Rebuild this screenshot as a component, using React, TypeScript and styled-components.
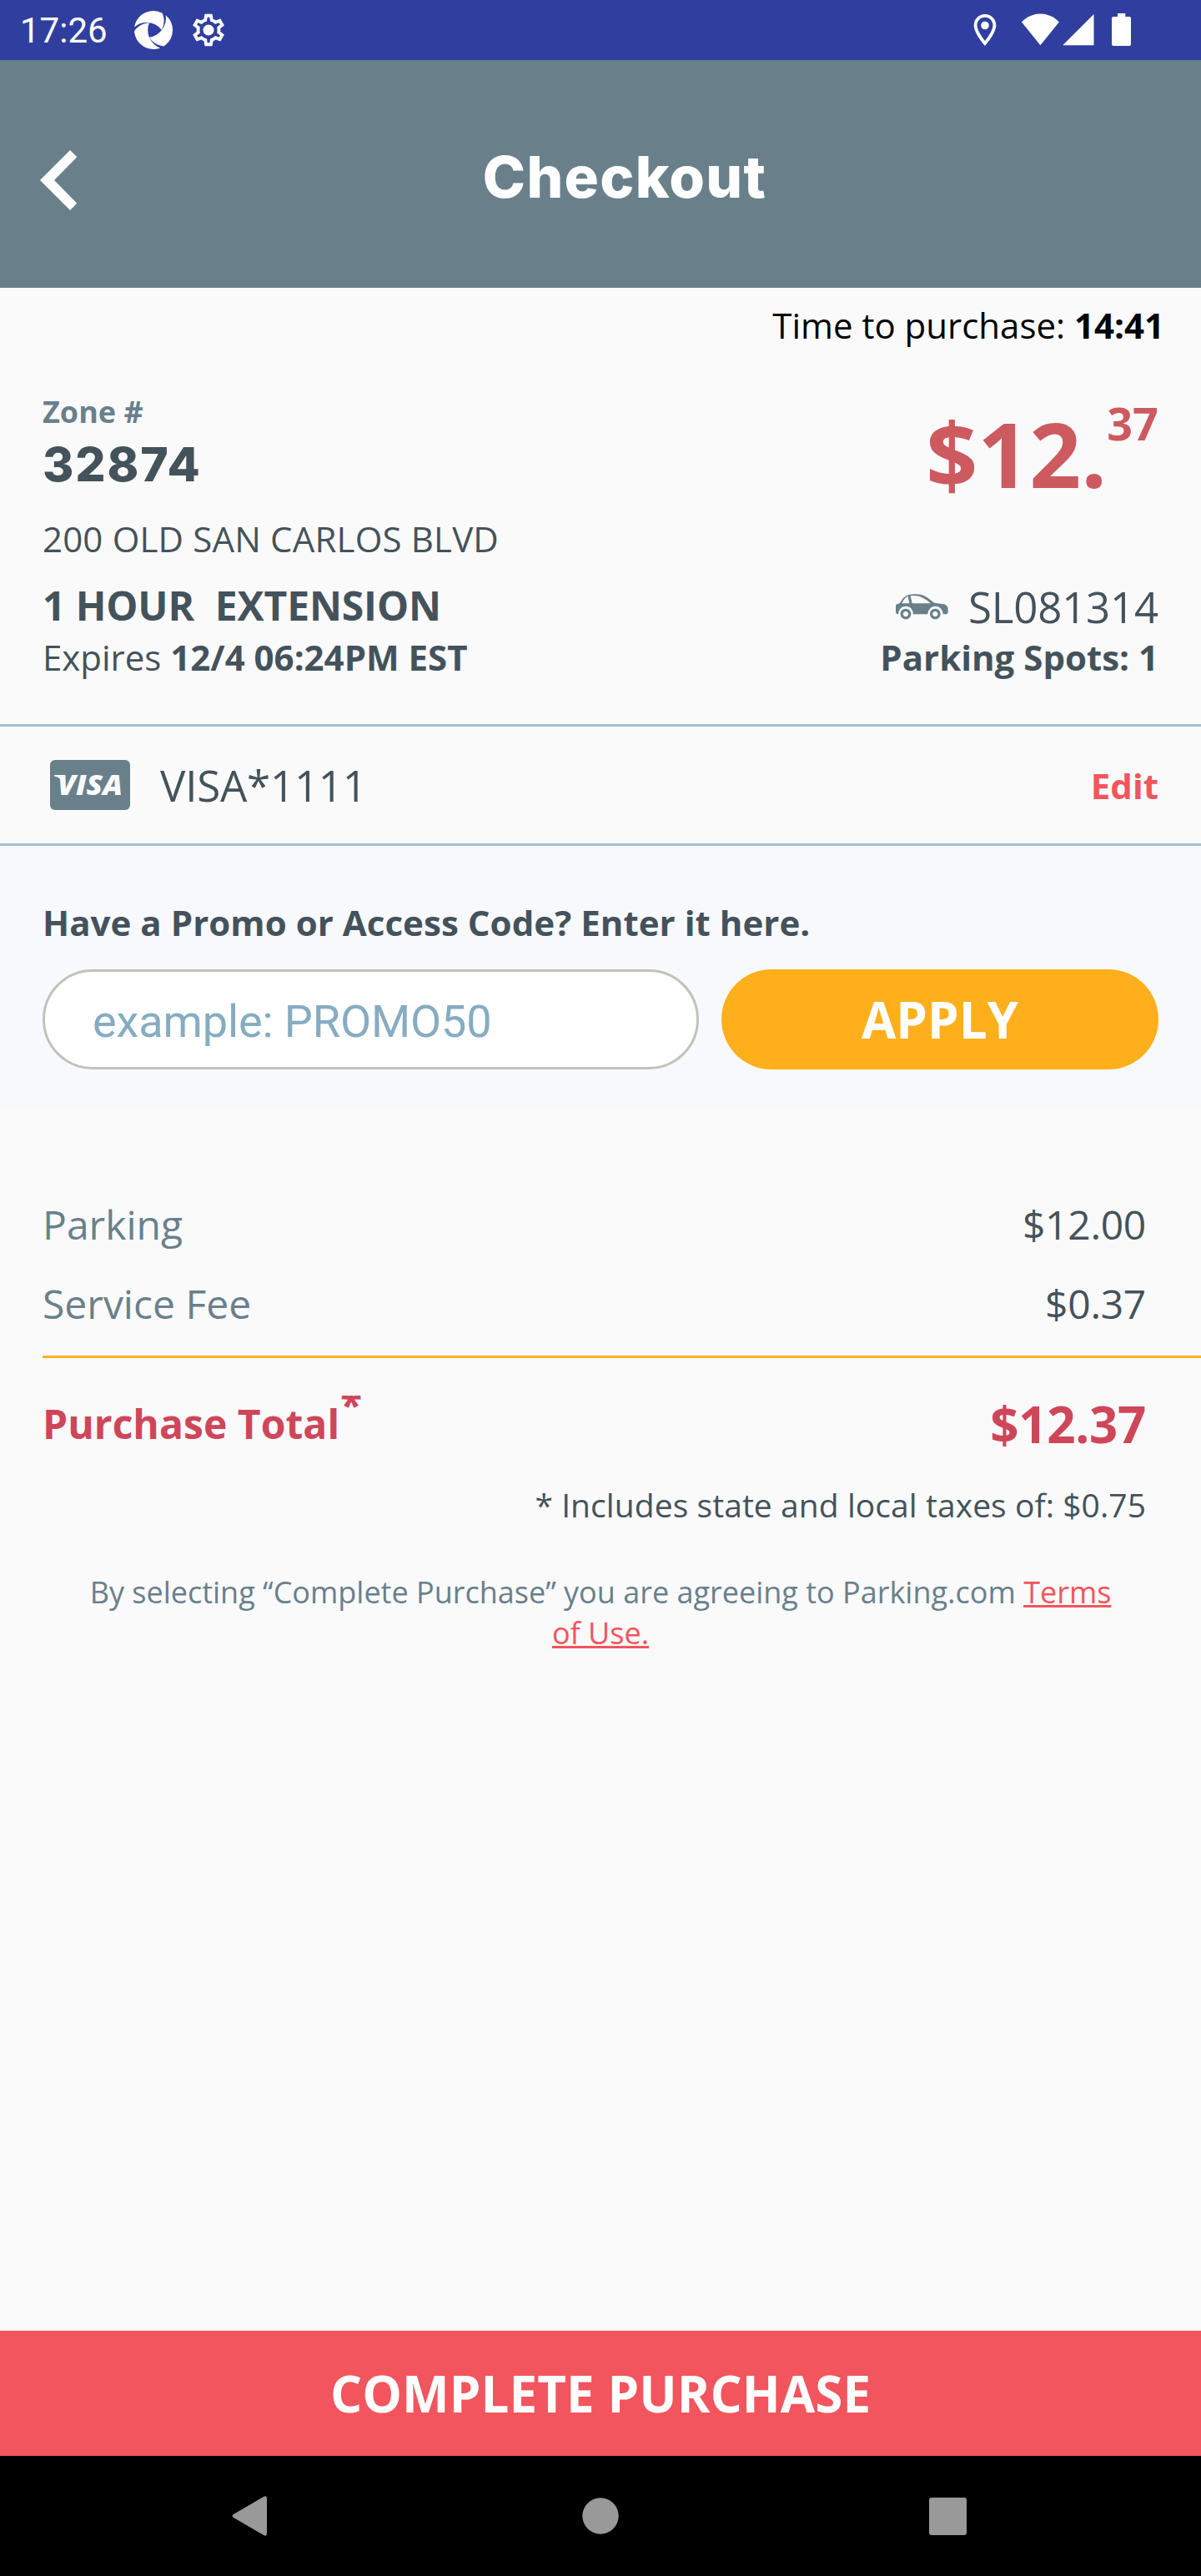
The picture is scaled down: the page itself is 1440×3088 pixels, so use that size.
import React from "react";
import styled, { createGlobalStyle } from "styled-components";
import { SiAppium } from "react-icons/si";

const slate = "#69808b";
const ink = "#44525b";
const coral = "#f2555d";
const crimson = "#cf4659";
const amber = "#ffaf1c";
const sky = "#9dc2d3";

const GlobalStyle = createGlobalStyle`
  * { box-sizing: border-box; }
  body { margin: 0; background: #fafafa; font-family: "Open Sans", "Noto Sans", sans-serif; }
`;

const Screen = styled.div`
  display: flex;
  flex-direction: column;
  width: 1440px;
  height: 3088px;
  background: #fafafa;
  color: ${ink};
  overflow: hidden;
`;

const StatusBar = styled.div`
  display: flex;
  align-items: center;
  justify-content: space-between;
  height: 72px;
  flex: none;
  padding: 0 83px 0 24px;
  background: #303f9f;
  color: #fff;
`;

const StatusGroup = styled.div`
  display: flex;
  align-items: center;
  gap: 20px;
`;

const Clock = styled.span`
  width: 117px;
  padding-top: 2px;
  font: 400 42px/72px Roboto, sans-serif;
`;

const Header = styled.header`
  display: grid;
  grid-template-columns: 140px 1fr 140px;
  align-items: center;
  height: 273px;
  flex: none;
  background: ${slate};
`;

const BackButton = styled.button`
  display: flex;
  padding: 14px 0 0 48px;
  border: 0;
  background: none;
`;

const Title = styled.h1`
  margin: 0;
  padding: 6px 0 0 58px;
  text-align: center;
  color: #fff;
  font: 800 69px/80px Inter, sans-serif;
  letter-spacing: 1.3px;
`;

const TimeRow = styled.div`
  height: 88px;
  padding: 1px 44px 0 0;
  text-align: right;
  color: #000;
  font-size: 42px;
  line-height: 88px;
`;

const Summary = styled.section`
  display: flex;
  justify-content: space-between;
  height: 435px;
  padding: 37px 51px 0;
`;

const Column = styled.div<{ $end?: boolean }>`
  display: flex;
  flex-direction: column;
  align-items: ${(p) => (p.$end ? "flex-end" : "flex-start")};
`;

const ZoneLabel = styled.div`
  color: ${slate};
  font-size: 36px;
  font-weight: 700;
  line-height: 48px;
`;

const ZoneNumber = styled.div`
  margin-top: 9px;
  font: 800 57px/60px Inter, sans-serif;
  letter-spacing: 1.9px;
`;

const Address = styled.div`
  margin-top: 31px;
  font-size: 42px;
  line-height: 56px;
  letter-spacing: 0.17px;
`;

const Duration = styled.div`
  margin-top: 20px;
  font-size: 48px;
  font-weight: 700;
  line-height: 64px;
  letter-spacing: -0.12px;
  white-space: pre;
`;

const Detail = styled.div<{ $bold?: boolean }>`
  margin-top: ${(p) => (p.$bold ? 1 : 2)}px;
  font-size: 42px;
  font-weight: ${(p) => (p.$bold ? 700 : 400)};
  line-height: 56px;
`;

const Price = styled.div`
  display: flex;
  align-items: flex-start;
  height: 133px;
  padding-top: 7px;
  color: #cc5a5f;
  font-weight: 700;
`;

const Dollars = styled.span`
  padding-top: 6px;
  font-size: 108.5px;
  line-height: 120px;
`;

const Cents = styled.span`
  font-size: 54px;
  line-height: 60px;
`;

const Plate = styled.div`
  display: flex;
  align-items: center;
  gap: 24px;
  margin-top: 92px;
  font-size: 51px;
  line-height: 64px;
  letter-spacing: -0.2px;
`;

const PaymentRow = styled.section`
  display: flex;
  align-items: center;
  height: 146px;
  padding: 0 51px 0 60px;
  border-top: 3px solid ${sky};
  border-bottom: 3px solid ${sky};
`;

const CardNumber = styled.span`
  padding-left: 36px;
  font-size: 51px;
  letter-spacing: -0.2px;
`;

const EditLink = styled.a`
  margin-left: auto;
  color: ${coral};
  font-size: 42px;
  font-weight: 700;
`;

const PromoPanel = styled.section`
  height: 315px;
  padding: 64px 51px 0;
  background: #f8f9fc;
`;

const PromoLabel = styled.label`
  display: block;
  height: 84px;
  font-size: 42px;
  font-weight: 700;
  line-height: 56px;
  letter-spacing: 0.05px;
`;

const PromoControls = styled.div`
  display: flex;
  gap: 27px;
`;

const PromoInput = styled.input`
  width: 787px;
  height: 120px;
  padding: 5px 57px 0;
  border: 3px solid #c1c2b9;
  border-radius: 60px;
  background: #fff;
  font: 400 54px Roboto, sans-serif;
  letter-spacing: -0.1px;
  &::placeholder {
    color: #86acc2;
    opacity: 1;
  }
`;

const ApplyButton = styled.button`
  flex: 1;
  height: 120px;
  padding: 0;
  border: 0;
  border-radius: 60px;
  background: ${amber};
  color: #fff;
  font: 700 60px/120px "Open Sans", sans-serif;
`;

const Fees = styled.section`
  padding: 91px 0 15px;
`;

const FeeRow = styled.div`
  display: flex;
  justify-content: space-between;
  padding: 0 66px 0 51px;
  color: ${slate};
  font-size: 48px;
  line-height: 95px;
`;

const FeeAmount = styled.span`
  color: ${ink};
  letter-spacing: -0.3px;
`;

const TotalRow = styled.section`
  display: flex;
  align-items: center;
  height: 126px;
  margin-left: 51px;
  padding: 34px 66px 0 0;
  border-top: 3px solid ${amber};
  color: ${crimson};
  font-size: 48px;
  font-weight: 700;
  letter-spacing: 0.05px;
`;

const Footnote = styled.span`
  align-self: flex-start;
  height: 22px;
  margin: 11px 0 0 1px;
  overflow: hidden;
  line-height: 21px;
`;

const TotalAmount = styled.span`
  margin-left: auto;
  font-size: 60px;
  letter-spacing: -0.3px;
`;

const TaxNote = styled.p`
  margin: 26px 66px 0;
  text-align: right;
  font-size: 39px;
  line-height: 54px;
  letter-spacing: 0.07px;
`;

const Terms = styled.p`
  width: 1245px;
  margin: 53px auto 0;
  text-align: center;
  color: ${slate};
  font-size: 36px;
  line-height: 49px;
`;

const TermsLink = styled.a`
  color: ${coral};
  text-decoration: underline;
`;

const CompleteButton = styled.button`
  height: 150px;
  flex: none;
  margin-top: auto;
  padding: 0;
  border: 0;
  background: ${coral};
  color: #fff;
  font: 700 60px/150px "Open Sans", sans-serif;
  letter-spacing: 0.1px;
`;

const NavBar = styled.nav`
  display: flex;
  align-items: center;
  justify-content: space-between;
  height: 144px;
  flex: none;
  padding: 0 281px 0 278px;
  background: #000;
`;

const HomeDot = styled.svg`
  margin-left: 4px;
`;

const GearIcon = () => (
  <svg width="46" height="46" viewBox="0 0 24 24" fill="#fff">
    <path d="M19.43 12.98c.04-.32.07-.64.07-.98 0-.34-.03-.66-.07-.98l2.11-1.65c.19-.15.24-.42.12-.64l-2-3.46c-.09-.16-.26-.25-.44-.25-.06 0-.12.01-.17.03l-2.49 1c-.52-.4-1.08-.73-1.69-.98l-.38-2.65C14.46 2.18 14.25 2 14 2h-4c-.25 0-.46.18-.49.42l-.38 2.65c-.61.25-1.17.59-1.69.98l-2.49-1c-.06-.02-.12-.03-.18-.03-.17 0-.34.09-.43.25l-2 3.46c-.13.22-.07.49.12.64l2.11 1.65c-.04.32-.07.65-.07.98 0 .33.03.66.07.98l-2.11 1.65c-.19.15-.24.42-.12.64l2 3.46c.09.16.26.25.44.25.06 0 .12-.01.17-.03l2.49-1c.52.4 1.08.73 1.69.98l.38 2.65c.03.24.24.42.49.42h4c.25 0 .46-.18.49-.42l.38-2.65c.61-.25 1.17-.59 1.69-.98l2.49 1c.06.02.12.03.18.03.17 0 .34-.09.43-.25l2-3.46c.12-.22.07-.49-.12-.64l-2.11-1.65zm-1.98-1.71c.04.31.05.52.05.73 0 .21-.02.43-.05.73l-.14 1.13.89.7 1.08.84-.7 1.21-1.27-.51-1.04-.42-.9.68c-.43.32-.84.56-1.25.73l-1.06.43-.16 1.13-.2 1.35h-1.4l-.19-1.35-.16-1.13-1.06-.43c-.43-.18-.83-.41-1.23-.71l-.91-.7-1.06.43-1.27.51-.7-1.21 1.08-.84.89-.7-.14-1.13c-.03-.31-.05-.54-.05-.74s.02-.43.05-.73l.14-1.13-.89-.7-1.08-.84.7-1.21 1.27.51 1.04.42.9-.68c.43-.32.84-.56 1.25-.73l1.06-.43.16-1.13.2-1.35h1.39l.19 1.35.16 1.13 1.06.43c.43.18.83.41 1.23.71l.91.7 1.06-.43 1.27-.51.7 1.21-1.07.85-.89.7.14 1.13z" />
    <circle cx="12" cy="12" r="3.4" />
  </svg>
);

const StatusIcons = () => (
  <svg width="190" height="40" viewBox="1167 16 190 40" fill="#fff">
    <path
      transform="translate(1158.2 13.2) scale(1.9)"
      d="M12 2C8.13 2 5 5.13 5 9c0 5.25 7 13 7 13s7-7.75 7-13c0-3.87-3.13-7-7-7zM7 9c0-2.76 2.24-5 5-5s5 2.24 5 5c0 2.88-2.88 7.19-5 9.88C9.92 16.21 7 11.85 7 9z"
    />
    <circle cx="1181" cy="30.5" r="4.8" />
    <path d="M1225 26.5C1238 13.3 1257 13.3 1269.8 26.5L1247.4 54.2Z" />
    <path d="M1311.5 17v37.2h-37.3z" />
    <path d="M1340 16h9.3v4h4.7q2 0 2 2v31q0 2-2 2h-19q-2 0-2-2v-31q0-2 2-2h5z" />
  </svg>
);

const CarIcon = () => (
  <svg width="63" height="31" viewBox="0 0 189 93" fill={slate}>
    <path
      fillRule="evenodd"
      d="M0 42Q1 36 14 34L23 20C33 7 46 1 68 1C95 0 111 8 136 31Q143 34 174 37Q188 42 188 55V66Q187 73 178 73H170C168 36 119 34 115 73H63C62 36 12 34 9 73H5Q0 72 0 64ZM22 34H49L44 8C34 11 28 22 22 34ZM53 7L59 34H126C102 13 80 3 53 7Z"
    />
    <path
      fillRule="evenodd"
      d="M36 53a19 19 0 1 0 .01 0ZM36 62.500a9.500 9.500 0 1 1-.01 0ZM142 53a19 19 0 1 0 .01 0ZM142 62.500a9.500 9.500 0 1 1-.01 0Z"
    />
  </svg>
);

const VisaBadge = () => (
  <svg width="96" height="60" viewBox="0 0 96 60">
    <rect width="96" height="60" rx="6" fill={slate} />
    <path d="M5 18H15L17 28Q13 21 5 19.500Z" fill="#fafafa" />
    <text
      x="9"
      y="42"
      textLength="78"
      lengthAdjust="spacingAndGlyphs"
      fill="#fafafa"
      fontFamily="Open Sans"
      fontSize="33.500"
      fontWeight="800"
      fontStyle="italic"
    >
      VISA
    </text>
  </svg>
);

export default function App() {
  return (
    <>
      <GlobalStyle />
      <Screen>
        <StatusBar>
          <StatusGroup>
            <Clock>17:26</Clock>
            <SiAppium size={46} />
            <GearIcon />
          </StatusGroup>
          <StatusIcons />
        </StatusBar>
        <Header>
          <BackButton aria-label="Back">
            <svg width="45" height="72" viewBox="0 0 45 72" fill="#fff">
              <path d="M36 0L44.300 8.300L17 36L44.300 63.700L36 72L0 36Z" />
            </svg>
          </BackButton>
          <Title>Checkout</Title>
        </Header>
        <TimeRow>
          Time to purchase: <b>14:41</b>
        </TimeRow>
        <Summary>
          <Column>
            <ZoneLabel>Zone #</ZoneLabel>
            <ZoneNumber>32874</ZoneNumber>
            <Address>200 OLD SAN CARLOS BLVD</Address>
            <Duration>{"1 HOUR  EXTENSION"}</Duration>
            <Detail>
              Expires <b>12/4 06:24PM EST</b>
            </Detail>
          </Column>
          <Column $end>
            <Price>
              <Dollars>$12.</Dollars>
              <Cents>37</Cents>
            </Price>
            <Plate>
              <CarIcon />
              SL081314
            </Plate>
            <Detail $bold>Parking Spots: 1</Detail>
          </Column>
        </Summary>
        <PaymentRow>
          <VisaBadge />
          <CardNumber>VISA*1111</CardNumber>
          <EditLink>Edit</EditLink>
        </PaymentRow>
        <PromoPanel>
          <PromoLabel htmlFor="promo">Have a Promo or Access Code? Enter it here.</PromoLabel>
          <PromoControls>
            <PromoInput id="promo" placeholder="example: PROMO50" />
            <ApplyButton>APPLY</ApplyButton>
          </PromoControls>
        </PromoPanel>
        <Fees>
          <FeeRow>
            Parking <FeeAmount>$12.00</FeeAmount>
          </FeeRow>
          <FeeRow>
            Service Fee <FeeAmount>$0.37</FeeAmount>
          </FeeRow>
        </Fees>
        <TotalRow>
          Purchase Total
          <Footnote>*</Footnote>
          <TotalAmount>$12.37</TotalAmount>
        </TotalRow>
        <TaxNote>* Includes state and local taxes of: $0.75</TaxNote>
        <Terms>
          By selecting “Complete Purchase” you are agreeing to Parking.com{" "}
          <TermsLink>Terms of Use.</TermsLink>
        </Terms>
        <CompleteButton>COMPLETE PURCHASE</CompleteButton>
        <NavBar>
          <svg width="43" height="48" viewBox="0 0 43 48" fill="#999">
            <path d="M2 22L38 1Q42 -1 42 3V45Q42 49 38 47L2 26Q-1 24 2 22Z" />
          </svg>
          <HomeDot width="44" height="44" viewBox="0 0 44 44" fill="#999">
            <circle cx="22" cy="22" r="21.700" />
          </HomeDot>
          <svg width="45" height="45" viewBox="0 0 45 45" fill="#999">
            <rect width="45" height="45" rx="3" />
          </svg>
        </NavBar>
      </Screen>
    </>
  );
}
